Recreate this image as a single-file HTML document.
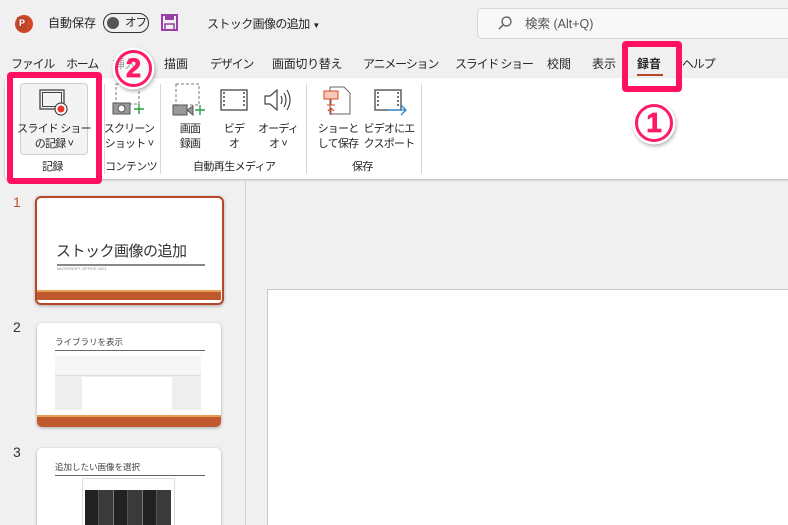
<!DOCTYPE html>
<html><head><meta charset="utf-8">
<style>
*{margin:0;padding:0;box-sizing:border-box}
html,body{width:788px;height:525px;overflow:hidden}
body{background:#f0f0f0;font-family:"Liberation Sans","Noto Sans CJK JP",sans-serif;color:#262626;position:relative;line-height:1.2}
.a{position:absolute;white-space:nowrap}
.t{font-size:12px}
.tab{position:absolute;top:56px;font-size:12px;color:#262626;white-space:nowrap;line-height:16px}
.k{letter-spacing:-1.2px}
.lbl{position:absolute;font-size:11px;text-align:center;line-height:15px;color:#262626;white-space:nowrap;letter-spacing:-0.8px}
.grp{position:absolute;top:160px;font-size:11px;color:#262626;white-space:nowrap;line-height:15px;letter-spacing:-0.6px}
.sep{position:absolute;top:84px;width:1px;height:90px;background:#d8d8d8}
.circ{position:absolute;border-radius:50%;border:3px solid #ff1a66;box-shadow:0 0 0 2.5px #fff,1px 2px 4px 2px rgba(0,0,0,.35);color:#ff1a66;font-weight:bold;text-align:center;-webkit-text-stroke:0.8px #ff1a66;font-family:"Liberation Sans",sans-serif;background:rgba(255,255,255,.55)}
.thumb{position:absolute;background:#fff;border-radius:5px;box-shadow:0 1px 3px rgba(0,0,0,.3);overflow:hidden}
.num{position:absolute;font-size:14px;color:#333;line-height:16px}
</style></head><body>
<!-- title bar -->
<div class="a" style="left:15px;top:15px;width:18px;height:18px;border-radius:50%;background:#d24726"></div>
<div class="a" style="left:17px;top:17px;width:10px;height:13px;background:#b7472a;color:#fff;font-size:9px;font-weight:bold;line-height:13px;text-align:center">P</div>
<div class="a t" style="left:48px;top:15px;line-height:16px">自動保存</div>
<div class="a" style="left:103px;top:13px;width:46px;height:20px;border:1.5px solid #333;border-radius:10px"></div>
<div class="a" style="left:107px;top:17px;width:12px;height:12px;border-radius:50%;background:#555"></div>
<div class="a" style="left:125px;top:15px;font-size:11.5px;line-height:16px;letter-spacing:-1px">オフ</div>
<svg class="a" style="left:161px;top:14px" width="17" height="17" viewBox="0 0 17 17"><rect x="1" y="1" width="15" height="15" fill="none" stroke="#9b3ea8" stroke-width="2"/><rect x="4" y="1" width="9" height="5" fill="#9b3ea8"/><rect x="4" y="10" width="9" height="6" fill="none" stroke="#9b3ea8" stroke-width="1.5"/></svg>
<div class="a" style="left:207px;top:16px;font-size:12px;line-height:16px;letter-spacing:-0.6px">ストック画像の追加 <span style="font-size:8px">▼</span></div>
<div class="a" style="left:477px;top:8px;width:320px;height:31px;background:#f8f8f8;border:1px solid #d6d6d6;border-radius:5px"></div>
<svg class="a" style="left:497px;top:15px" width="16" height="16" viewBox="0 0 16 16"><circle cx="9.5" cy="6.5" r="4.5" fill="none" stroke="#555" stroke-width="1.3"/><line x1="6" y1="10" x2="2" y2="14" stroke="#555" stroke-width="1.3"/></svg>
<div class="a" style="left:525px;top:16px;font-size:12.5px;line-height:16px;color:#555">検索 (Alt+Q)</div>
<!-- tabs -->
<div class="tab k" style="left:11px">ファイル</div>
<div class="tab k" style="left:66px">ホーム</div>
<div class="tab" style="left:113px">挿入</div>
<div class="tab" style="left:164px">描画</div>
<div class="tab k" style="left:210px">デザイン</div>
<div class="tab" style="left:272px;letter-spacing:-0.3px">画面切り替え</div>
<div class="tab k" style="left:363px">アニメーション</div>
<div class="tab k" style="left:455px">スライド ショー</div>
<div class="tab" style="left:547px">校閲</div>
<div class="tab" style="left:592px">表示</div>
<div class="tab" style="left:637px;font-weight:bold">録音</div>
<div class="a" style="left:637px;top:74px;width:26px;height:2px;background:#b7472a"></div>
<div class="tab k" style="left:682px">ヘルプ</div>
<!-- ribbon -->
<div class="a" style="left:5px;top:78px;width:790px;height:101px;background:#fff;box-shadow:0 1px 2px rgba(0,0,0,.25);border-radius:4px 0 0 4px"></div>
<div class="a" style="left:20px;top:83px;width:68px;height:72px;background:#f3f3f3;border:1px solid #d0d0d0;border-radius:4px"></div>
<svg class="a" style="left:39px;top:88px" width="30" height="30" viewBox="0 0 30 30"><rect x="1" y="2" width="24" height="19" fill="none" stroke="#444" stroke-width="1.3"/><rect x="3.5" y="4.5" width="19" height="14" fill="none" stroke="#444" stroke-width="1"/><circle cx="22" cy="21" r="6" fill="#fff" stroke="#444" stroke-width="1.2"/><circle cx="22" cy="21" r="3.5" fill="#e8322e"/></svg>
<div class="lbl" style="left:14px;top:122px;width:80px">スライド ショー<br>の記録 ˅</div>
<div class="grp" style="left:42px">記録</div>
<div class="sep" style="left:104px"></div>
<svg class="a" style="left:112px;top:83px" width="36" height="36" viewBox="0 0 36 36"><rect x="4" y="1" width="23" height="20" fill="none" stroke="#777" stroke-dasharray="3 2"/><rect x="1" y="20" width="17" height="11" fill="#999" stroke="#555"/><circle cx="9.5" cy="25.5" r="3.5" fill="#fff" stroke="#555"/><path d="M27 21v10M22 26h10" stroke="#2f9e44" stroke-width="1.4"/></svg>
<div class="lbl" style="left:100px;top:122px;width:58px">スクリーン<br>ショット ˅</div>
<div class="grp" style="left:105px">コンテンツ</div>
<div class="sep" style="left:160px"></div>
<svg class="a" style="left:172px;top:83px" width="36" height="36" viewBox="0 0 36 36"><rect x="4" y="1" width="23" height="21" fill="none" stroke="#777" stroke-dasharray="3 2"/><rect x="1" y="22" width="14" height="10" fill="#999" stroke="#555"/><path d="M15 27l6-4v9z" fill="#999" stroke="#555"/><path d="M28 22v10M23 27h10" stroke="#2f9e44" stroke-width="1.4"/></svg>
<svg class="a" style="left:220px;top:88px" width="28" height="24" viewBox="0 0 28 24"><rect x="1" y="2" width="26" height="20" fill="none" stroke="#444" stroke-width="1.3"/><path d="M4 4v16M24 4v16" stroke="#444" stroke-dasharray="2 2" stroke-width="1.5"/></svg>
<svg class="a" style="left:263px;top:86px" width="28" height="28" viewBox="0 0 28 28"><path d="M2 10h5l7-6v20l-7-6H2z" fill="none" stroke="#444" stroke-width="1.2"/><path d="M18 10q2 4 0 8M21 7q4 7 0 14M24 4q6 10 0 20" fill="none" stroke="#444" stroke-width="1.2"/></svg>
<div class="lbl" style="left:170px;top:122px;width:40px">画面<br>録画</div>
<div class="lbl" style="left:216px;top:122px;width:36px">ビデ<br>オ</div>
<div class="lbl" style="left:252px;top:122px;width:52px">オーディ<br>オ ˅</div>
<div class="grp" style="left:193px">自動再生メディア</div>
<div class="sep" style="left:306px"></div>
<svg class="a" style="left:322px;top:86px" width="30" height="30" viewBox="0 0 30 30"><path d="M8 1h14l6 6v21H8z" fill="#fff" stroke="#666"/><rect x="2" y="5" width="14" height="8" fill="#f8c9b9" stroke="#d24726"/><path d="M9 13v6M5 19h8M9 29v-6M6 25l3-3 3 3" stroke="#d24726" fill="none"/></svg>
<svg class="a" style="left:374px;top:88px" width="34" height="28" viewBox="0 0 34 28"><rect x="1" y="2" width="26" height="20" fill="none" stroke="#444" stroke-width="1.3"/><path d="M4 4v16M24 4v16" stroke="#444" stroke-dasharray="2 2" stroke-width="1.5"/><path d="M14 22h18M27 17l5 5-5 5" fill="none" stroke="#2b88d8" stroke-width="1.3"/></svg>
<div class="lbl" style="left:308px;top:122px;width:60px">ショーと<br>して保存</div>
<div class="lbl" style="left:359px;top:122px;width:60px">ビデオにエ<br>クスポート</div>
<div class="grp" style="left:352px">保存</div>
<div class="sep" style="left:421px"></div>
<!-- red boxes -->
<div class="a" style="left:7px;top:72px;width:95px;height:112px;border:6px solid #ff1060;border-radius:4px"></div>
<div class="a" style="left:622px;top:41px;width:60px;height:51px;border:6px solid #ff1060;border-radius:4px"></div>
<div class="circ" style="left:115px;top:50px;width:37px;height:37px;font-size:27px;line-height:31px">2</div>
<div class="circ" style="left:635px;top:104px;width:38px;height:38px;font-size:28px;line-height:32px">1</div>
<!-- panes -->
<div class="a" style="left:245px;top:181px;width:1px;height:344px;background:#d0d0d0"></div>
<div class="a" style="left:267px;top:289px;width:530px;height:240px;background:#fff;border:1px solid #c6c6c6"></div>
<div class="num" style="left:13px;top:194px;color:#c0502a">1</div>
<div class="thumb" style="left:35px;top:196px;width:189px;height:109px;border:2.5px solid #b7472a;border-radius:6px">
 <div class="a" style="left:19px;top:45px;font-size:15px;line-height:18px;color:#333;letter-spacing:-0.5px">ストック画像の追加</div>
 <div class="a" style="left:20px;top:66px;width:148px;height:1.5px;background:#888"></div>
 <div class="a" style="left:20px;top:69px;font-size:4px;color:#888">MICROSOFT OFFICE 2021</div>
 <div class="a" style="left:0;top:92px;width:184px;height:2px;background:#e8a050"></div>
 <div class="a" style="left:0;top:94px;width:184px;height:8px;background:#c05a2e"></div>
</div>
<div class="num" style="left:13px;top:319px">2</div>
<div class="thumb" style="left:37px;top:323px;width:184px;height:104px">
 <div class="a" style="left:18px;top:14px;font-size:8.5px;line-height:10px;color:#444">ライブラリを表示</div>
 <div class="a" style="left:18px;top:27px;width:150px;height:1px;background:#666"></div>
 <div class="a" style="left:18px;top:33px;width:146px;height:54px;background:#eee"></div>
 <div class="a" style="left:18px;top:33px;width:146px;height:20px;background:#f6f6f6;border-bottom:1px solid #ddd"></div>
 <div class="a" style="left:45px;top:54px;width:90px;height:33px;background:#fff"></div>
 <div class="a" style="left:0;top:92px;width:184px;height:2px;background:#e8a050"></div>
 <div class="a" style="left:0;top:94px;width:184px;height:10px;background:#c05a2e"></div>
</div>
<div class="num" style="left:13px;top:444px">3</div>
<div class="thumb" style="left:37px;top:448px;width:184px;height:90px">
 <div class="a" style="left:18px;top:14px;font-size:8.5px;line-height:10px;color:#444">追加したい画像を選択</div>
 <div class="a" style="left:18px;top:27px;width:150px;height:1px;background:#666"></div>
 <div class="a" style="left:45px;top:30px;width:93px;height:60px;background:#fff;border:1px solid #ddd"></div>
 <div class="a" style="left:48px;top:42px;width:86px;height:40px;background:repeating-linear-gradient(90deg,#222 0 13px,#555 13px 14px,#3a3a3a 14px 28px,#777 28px 29px)"></div>
</div>
</body></html>
